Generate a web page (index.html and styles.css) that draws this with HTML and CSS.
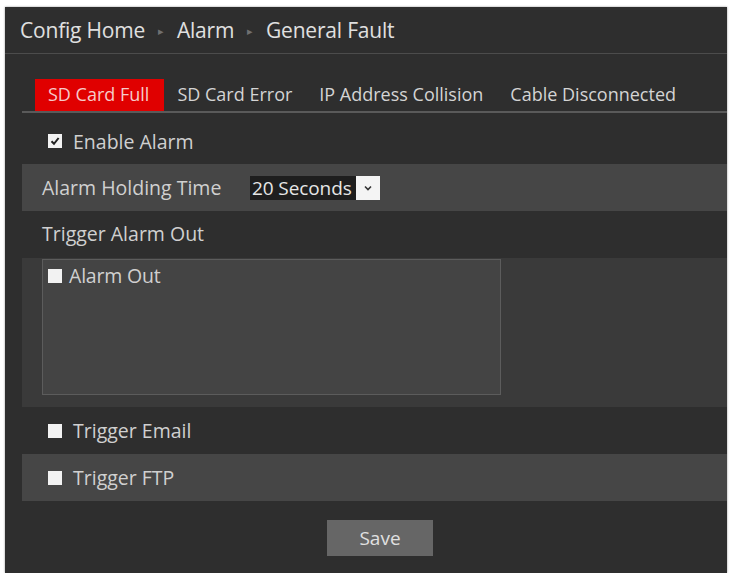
FILE: index.html
```html
<!DOCTYPE html>
<html lang="en">
<head>
    <meta charset="UTF-8">
    <title>General Fault</title>
    <link rel="stylesheet" href="styles.css">
</head>
<body>
    <div class="panel">
        <!-- Breadcrumb -->
        <div class="crumbs">
            <span>Config Home</span>
            <span class="sep">&#9656;</span>
            <span>Alarm</span>
            <span class="sep">&#9656;</span>
            <span>General Fault</span>
        </div>

        <div class="content">
            <!-- Fault type tabs -->
            <div class="tabs">
                <span class="tab active">SD Card Full</span>
                <span class="tab">SD Card Error</span>
                <span class="tab">IP Address Collision</span>
                <span class="tab">Cable Disconnected</span>
            </div>

            <div class="row row-enable check-row">
                <span class="box checked">
                    <svg width="10" height="10" viewBox="0 0 10 10"><path d="M1.5 5.2 L4 7.8 L8.6 2" fill="none" stroke="#222" stroke-width="2"/></svg>
                </span>
                <span>Enable Alarm</span>
            </div>

            <div class="row shade">
                <span class="label">Alarm Holding Time</span>
                <div class="select">
                    <span class="select-value">20 Seconds</span>
                    <span class="select-arrow">
                        <svg width="8" height="6" viewBox="0 0 8 6"><path d="M1 1.5 L4 4.5 L7 1.5" fill="none" stroke="#333" stroke-width="1.6"/></svg>
                    </span>
                </div>
            </div>

            <div class="row row-title">
                <span class="label">Trigger Alarm Out</span>
            </div>

            <div class="out-area">
                <div class="out-box">
                    <div class="out-item">
                        <span class="box"></span>
                        <span>Alarm Out</span>
                    </div>
                </div>
            </div>

            <div class="row check-row">
                <span class="box"></span>
                <span>Trigger Email</span>
            </div>

            <div class="row shade check-row">
                <span class="box"></span>
                <span>Trigger FTP</span>
            </div>

            <div class="actions">
                <button class="save">Save</button>
            </div>
        </div>
    </div>
</body>
</html>
```

FILE: styles.css
```css
/* Page and dark settings panel */
body {
    margin: 0;
    background-color: #fff;
    font-family: 'Open Sans', 'Noto Sans', sans-serif;
    color: #d0d0d0;
}
.panel {
    margin: 7px 4px 0 5px;
    width: 722px;
    height: 566px;
    background-color: #2e2e2e;
    box-shadow: 0 0 2px rgba(0, 0, 0, 0.4);
}
/* Breadcrumb header */
.crumbs {
    height: 46px;
    display: flex;
    align-items: center;
    gap: 13px;
    padding-left: 15px;
    font-size: 21px;
    letter-spacing: -0.2px;
    color: #e0e0e0;
    border-bottom: 1px solid #4c4c4c;
}
.crumbs .sep {
    font-size: 11px;
    color: #707070;
}
.content {
    padding-left: 17px;
}
/* Tabs */
.tabs {
    display: flex;
    margin-top: 25px;
    padding-left: 13px;
    border-bottom: 2px solid #5a5a5a;
}
.tab {
    height: 32px;
    line-height: 31px;
    padding: 0 14px 0 13px;
    font-size: 18px;
    color: #d4d4d4;
}
.tab.active {
    padding-right: 15px;
    background-color: #e00000;
    color: #f6caca;
}
/* Form rows */
.row {
    height: 47px;
    display: flex;
    align-items: center;
    padding-left: 20px;
    font-size: 19.5px;
}
.row-enable {
    height: 51px;
    padding-top: 5px;
    box-sizing: border-box;
}
.row-title {
    height: 47px;
    padding-bottom: 2px;
    box-sizing: border-box;
}
.check-row {
    padding-left: 26px;
    gap: 11px;
}
.shade {
    background-color: #464646;
}
.label {
    width: 208px;
}
.box {
    width: 14px;
    height: 14px;
    background-color: #f2f2f2;
    display: inline-flex;
    align-items: center;
    justify-content: center;
}
/* Dropdown */
.select {
    display: flex;
    height: 24px;
}
.select-value {
    background-color: #1e1e1e;
    color: #e6e6e6;
    font-size: 19px;
    line-height: 24px;
    padding: 0 0 0 2px;
    width: 104px;
    overflow: hidden;
    white-space: nowrap;
    letter-spacing: -0.1px;
}
.select-arrow {
    width: 24px;
    background-color: #f4f4f4;
    display: flex;
    align-items: center;
    justify-content: center;
}
/* Alarm output list */
.out-area {
    height: 149px;
    background-color: #3a3a3a;
    padding: 1px 0 0 20px;
    box-sizing: border-box;
}
.out-box {
    width: 457px;
    height: 134px;
    border: 1px solid #5c5c5c;
    background-color: #444;
}
.out-item {
    display: flex;
    align-items: center;
    gap: 7px;
    padding: 2px 0 0 5px;
    font-size: 19.5px;
    letter-spacing: -0.2px;
}
/* Save button */
.actions {
    padding: 19px 0 0 305px;
}
.save {
    width: 106px;
    height: 36px;
    border: none;
    background-color: #666;
    color: #e0e0e0;
    font-family: inherit;
    font-size: 19px;
}
```
